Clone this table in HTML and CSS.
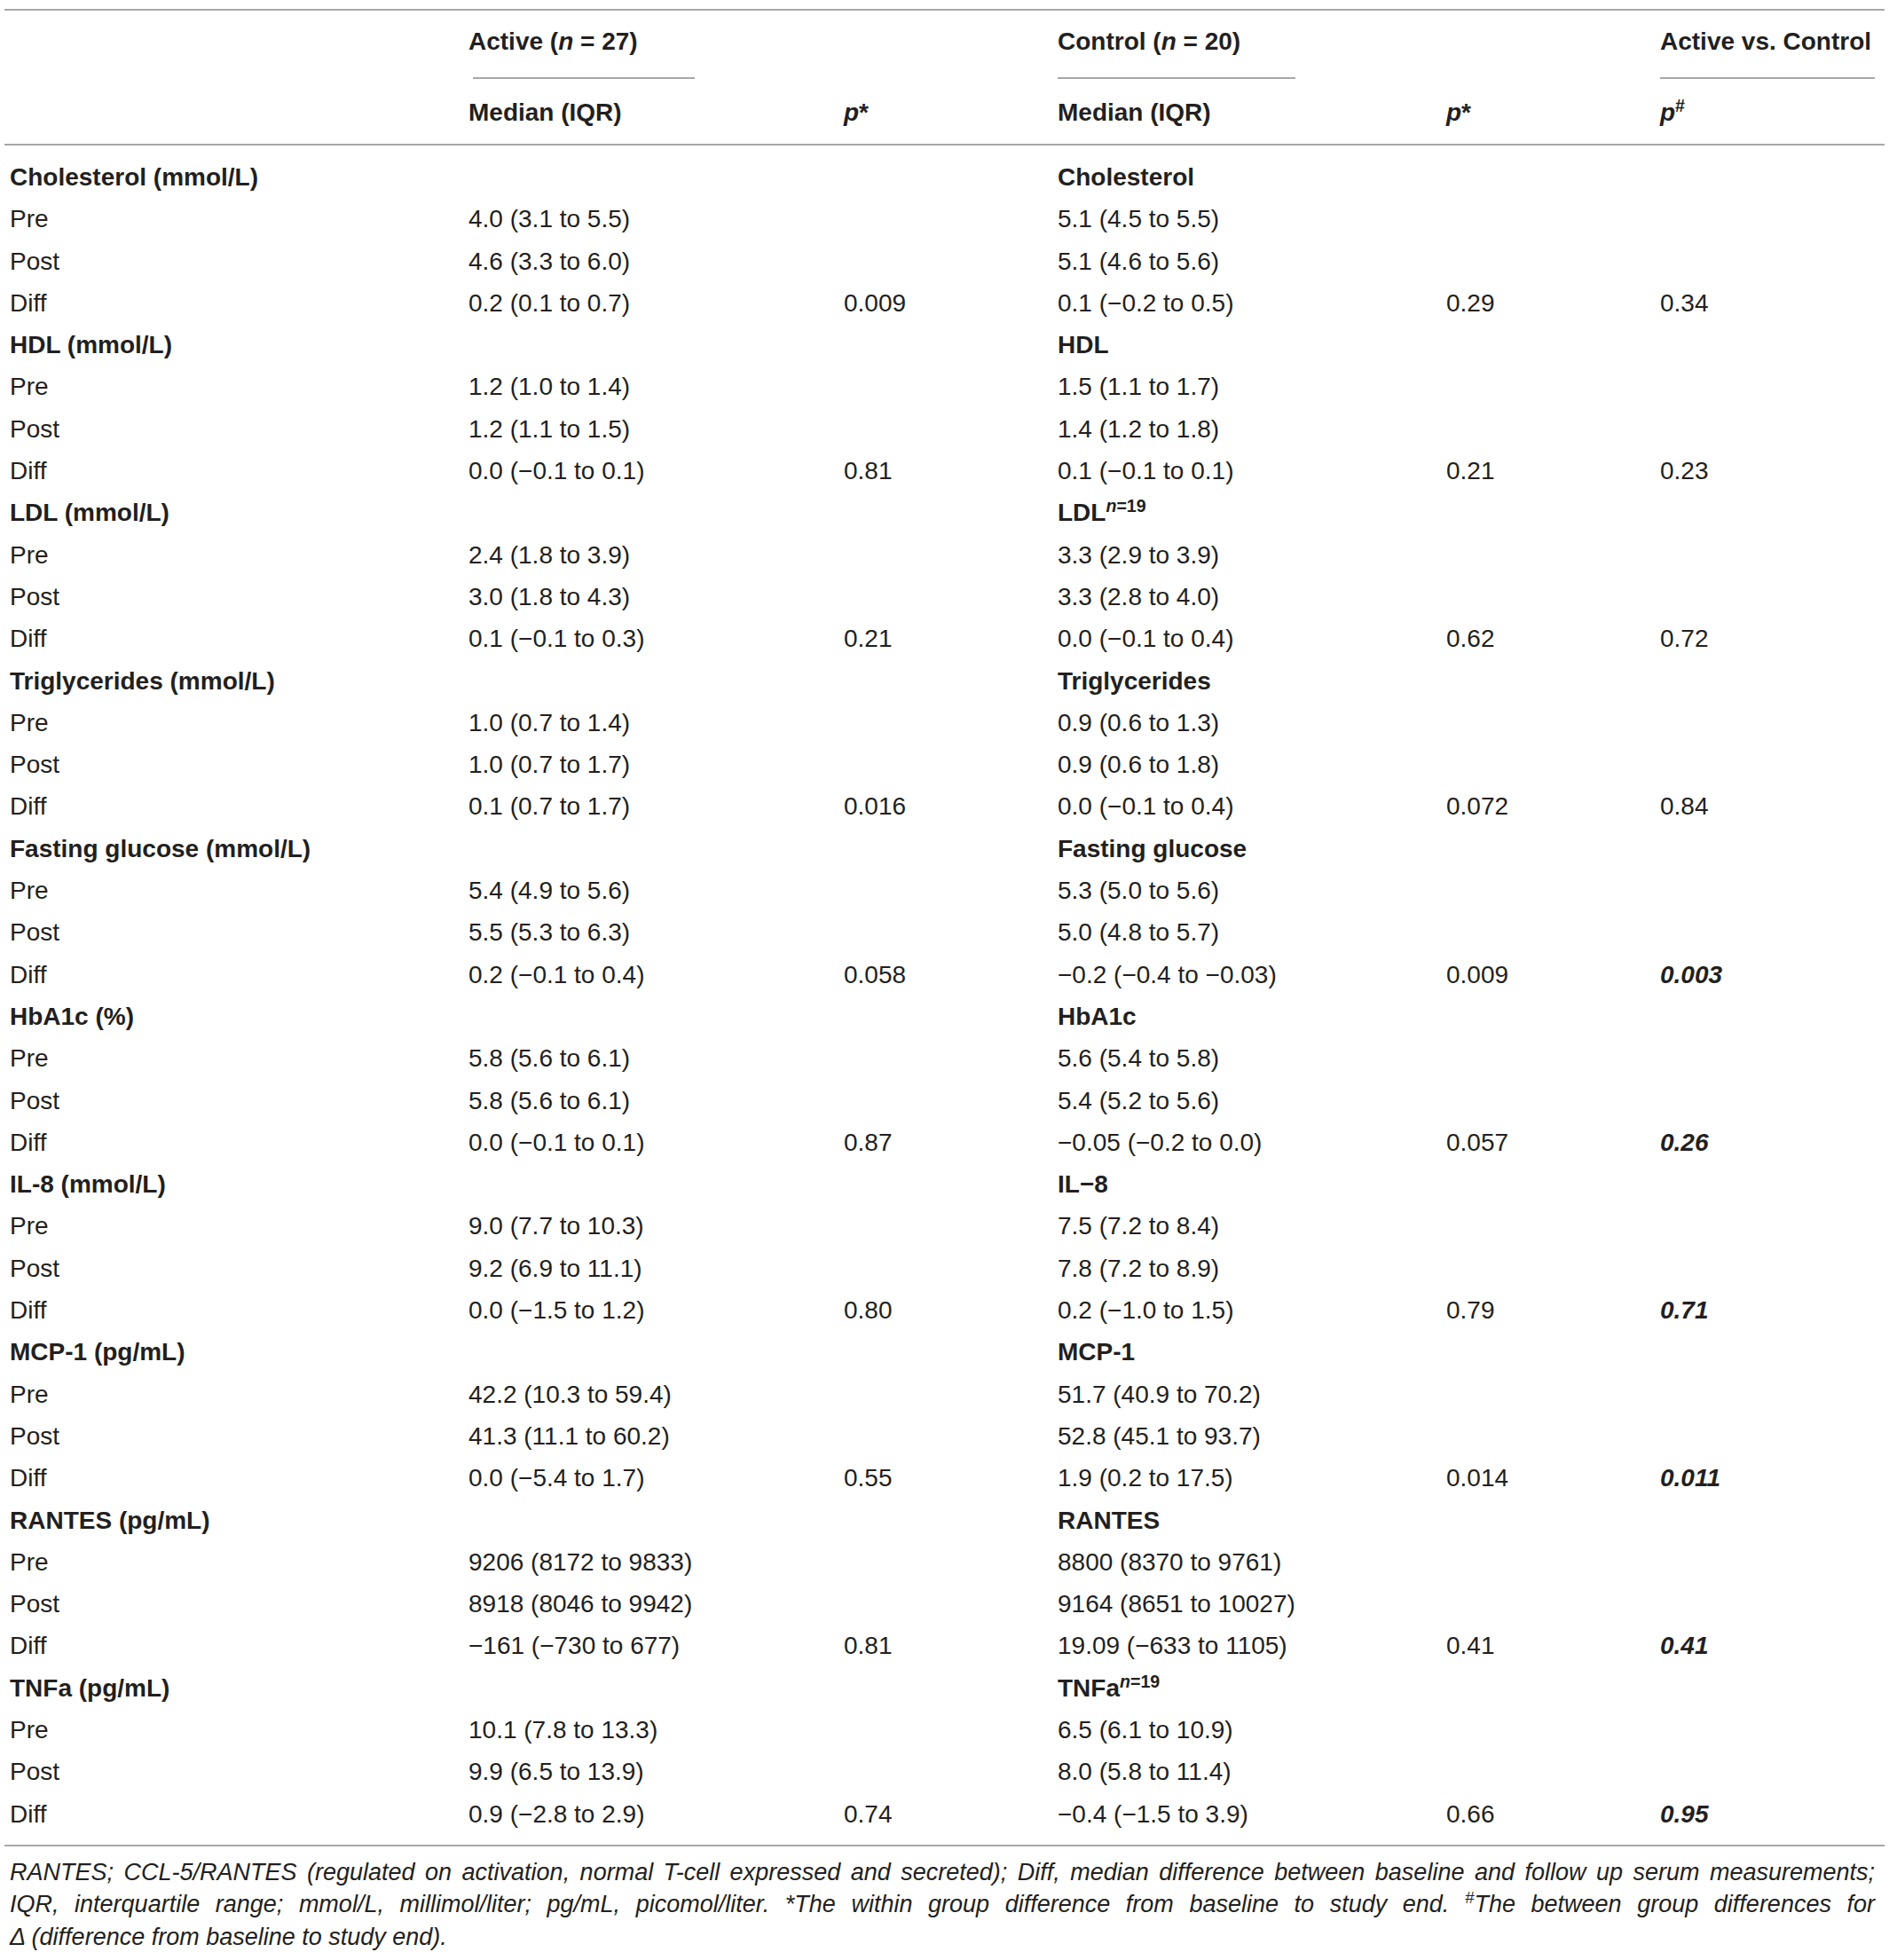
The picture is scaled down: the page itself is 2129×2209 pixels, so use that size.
FILE: index.html
```html
<!DOCTYPE html>
<html lang="en">
<head>
  <meta charset="UTF-8">
  <title>Serum markers, Active vs. Control</title>
  <link rel="stylesheet" href="styles.css">
</head>
<body>
  <div class="wrap">
    <table class="results">
      <colgroup>
        <col class="c-label">
        <col class="c-med1">
        <col class="c-p1">
        <col class="c-med2">
        <col class="c-p2">
        <col class="c-p3">
      </colgroup>
      <thead>
        <tr class="group-row">
          <th></th>
          <th colspan="2"><div class="group group-active">Active (<i>n</i> = 27)</div></th>
          <th colspan="2"><div class="group group-control">Control (<i>n</i> = 20)</div></th>
          <th><div class="group group-between">Active vs. Control</div></th>
        </tr>
        <tr class="sub-row">
          <th></th>
          <th>Median (IQR)</th>
          <th><i>p</i>*</th>
          <th>Median (IQR)</th>
          <th><i>p</i>*</th>
          <th><i>p</i><sup>#</sup></th>
        </tr>
      </thead>
      <tbody>
        <tr class="head first"><td>Cholesterol (mmol/L)</td><td></td><td></td><td>Cholesterol</td><td></td><td></td></tr>
        <tr><td>Pre</td><td>4.0 (3.1 to 5.5)</td><td></td><td>5.1 (4.5 to 5.5)</td><td></td><td></td></tr>
        <tr><td>Post</td><td>4.6 (3.3 to 6.0)</td><td></td><td>5.1 (4.6 to 5.6)</td><td></td><td></td></tr>
        <tr><td>Diff</td><td>0.2 (0.1 to 0.7)</td><td>0.009</td><td>0.1 (&minus;0.2 to 0.5)</td><td>0.29</td><td>0.34</td></tr>

        <tr class="head"><td>HDL (mmol/L)</td><td></td><td></td><td>HDL</td><td></td><td></td></tr>
        <tr><td>Pre</td><td>1.2 (1.0 to 1.4)</td><td></td><td>1.5 (1.1 to 1.7)</td><td></td><td></td></tr>
        <tr><td>Post</td><td>1.2 (1.1 to 1.5)</td><td></td><td>1.4 (1.2 to 1.8)</td><td></td><td></td></tr>
        <tr><td>Diff</td><td>0.0 (&minus;0.1 to 0.1)</td><td>0.81</td><td>0.1 (&minus;0.1 to 0.1)</td><td>0.21</td><td>0.23</td></tr>

        <tr class="head"><td>LDL (mmol/L)</td><td></td><td></td><td>LDL<sup><i>n</i>=19</sup></td><td></td><td></td></tr>
        <tr><td>Pre</td><td>2.4 (1.8 to 3.9)</td><td></td><td>3.3 (2.9 to 3.9)</td><td></td><td></td></tr>
        <tr><td>Post</td><td>3.0 (1.8 to 4.3)</td><td></td><td>3.3 (2.8 to 4.0)</td><td></td><td></td></tr>
        <tr><td>Diff</td><td>0.1 (&minus;0.1 to 0.3)</td><td>0.21</td><td>0.0 (&minus;0.1 to 0.4)</td><td>0.62</td><td>0.72</td></tr>

        <tr class="head"><td>Triglycerides (mmol/L)</td><td></td><td></td><td>Triglycerides</td><td></td><td></td></tr>
        <tr><td>Pre</td><td>1.0 (0.7 to 1.4)</td><td></td><td>0.9 (0.6 to 1.3)</td><td></td><td></td></tr>
        <tr><td>Post</td><td>1.0 (0.7 to 1.7)</td><td></td><td>0.9 (0.6 to 1.8)</td><td></td><td></td></tr>
        <tr><td>Diff</td><td>0.1 (0.7 to 1.7)</td><td>0.016</td><td>0.0 (&minus;0.1 to 0.4)</td><td>0.072</td><td>0.84</td></tr>

        <tr class="head"><td>Fasting glucose (mmol/L)</td><td></td><td></td><td>Fasting glucose</td><td></td><td></td></tr>
        <tr><td>Pre</td><td>5.4 (4.9 to 5.6)</td><td></td><td>5.3 (5.0 to 5.6)</td><td></td><td></td></tr>
        <tr><td>Post</td><td>5.5 (5.3 to 6.3)</td><td></td><td>5.0 (4.8 to 5.7)</td><td></td><td></td></tr>
        <tr><td>Diff</td><td>0.2 (&minus;0.1 to 0.4)</td><td>0.058</td><td>&minus;0.2 (&minus;0.4 to &minus;0.03)</td><td>0.009</td><td class="sig">0.003</td></tr>

        <tr class="head"><td>HbA1c (%)</td><td></td><td></td><td>HbA1c</td><td></td><td></td></tr>
        <tr><td>Pre</td><td>5.8 (5.6 to 6.1)</td><td></td><td>5.6 (5.4 to 5.8)</td><td></td><td></td></tr>
        <tr><td>Post</td><td>5.8 (5.6 to 6.1)</td><td></td><td>5.4 (5.2 to 5.6)</td><td></td><td></td></tr>
        <tr><td>Diff</td><td>0.0 (&minus;0.1 to 0.1)</td><td>0.87</td><td>&minus;0.05 (&minus;0.2 to 0.0)</td><td>0.057</td><td class="sig">0.26</td></tr>

        <tr class="head"><td>IL-8 (mmol/L)</td><td></td><td></td><td>IL&minus;8</td><td></td><td></td></tr>
        <tr><td>Pre</td><td>9.0 (7.7 to 10.3)</td><td></td><td>7.5 (7.2 to 8.4)</td><td></td><td></td></tr>
        <tr><td>Post</td><td>9.2 (6.9 to 11.1)</td><td></td><td>7.8 (7.2 to 8.9)</td><td></td><td></td></tr>
        <tr><td>Diff</td><td>0.0 (&minus;1.5 to 1.2)</td><td>0.80</td><td>0.2 (&minus;1.0 to 1.5)</td><td>0.79</td><td class="sig">0.71</td></tr>

        <tr class="head"><td>MCP-1 (pg/mL)</td><td></td><td></td><td>MCP-1</td><td></td><td></td></tr>
        <tr><td>Pre</td><td>42.2 (10.3 to 59.4)</td><td></td><td>51.7 (40.9 to 70.2)</td><td></td><td></td></tr>
        <tr><td>Post</td><td>41.3 (11.1 to 60.2)</td><td></td><td>52.8 (45.1 to 93.7)</td><td></td><td></td></tr>
        <tr><td>Diff</td><td>0.0 (&minus;5.4 to 1.7)</td><td>0.55</td><td>1.9 (0.2 to 17.5)</td><td>0.014</td><td class="sig">0.011</td></tr>

        <tr class="head"><td>RANTES (pg/mL)</td><td></td><td></td><td>RANTES</td><td></td><td></td></tr>
        <tr><td>Pre</td><td>9206 (8172 to 9833)</td><td></td><td>8800 (8370 to 9761)</td><td></td><td></td></tr>
        <tr><td>Post</td><td>8918 (8046 to 9942)</td><td></td><td>9164 (8651 to 10027)</td><td></td><td></td></tr>
        <tr><td>Diff</td><td>&minus;161 (&minus;730 to 677)</td><td>0.81</td><td>19.09 (&minus;633 to 1105)</td><td>0.41</td><td class="sig">0.41</td></tr>

        <tr class="head"><td>TNFa (pg/mL)</td><td></td><td></td><td>TNFa<sup><i>n</i>=19</sup></td><td></td><td></td></tr>
        <tr><td>Pre</td><td>10.1 (7.8 to 13.3)</td><td></td><td>6.5 (6.1 to 10.9)</td><td></td><td></td></tr>
        <tr><td>Post</td><td>9.9 (6.5 to 13.9)</td><td></td><td>8.0 (5.8 to 11.4)</td><td></td><td></td></tr>
        <tr class="last"><td>Diff</td><td>0.9 (&minus;2.8 to 2.9)</td><td>0.74</td><td>&minus;0.4 (&minus;1.5 to 3.9)</td><td>0.66</td><td class="sig">0.95</td></tr>
      </tbody>
    </table>

    <p class="note">
      <span class="note-line">RANTES; CCL-5/RANTES (regulated on activation, normal T-cell expressed and secreted); Diff, median difference between baseline and follow up serum measurements;</span>
      <span class="note-line">IQR, interquartile range; mmol/L, millimol/liter; pg/mL, picomol/liter. *The within group difference from baseline to study end. <sup>#</sup>The between group differences for</span>
      &Delta; (difference from baseline to study end).
    </p>
  </div>
</body>
</html>
```

FILE: styles.css
```css
body {
  margin: 0;
  padding: 0;
  background: #fff;
  color: #231f20;
  font-family: "Liberation Sans", Arial, sans-serif;
}

.wrap {
  padding: 0 5px;
}

.results {
  width: 100%;
  border-collapse: collapse;
  table-layout: fixed;
  font-size: 28px;
  margin-top: 10px;
  border-top: 2px solid #a7a7a7;
  border-bottom: 2px solid #a7a7a7;
}

.c-label { width: 517px; }
.c-med1 { width: 423px; }
.c-p1 { width: 241px; }
.c-med2 { width: 438px; }
.c-p2 { width: 241px; }
.c-p3 { width: 259px; }

th {
  text-align: left;
  font-weight: bold;
  line-height: 40px;
  padding: 0 6px;
  vertical-align: top;
  white-space: nowrap;
}

.group-row th {
  padding-top: 15px;
}

.group {
  padding-bottom: 20px;
  border-bottom: 2px solid #a7a7a7;
}

.group-active { width: 250px; margin-left: 5px; text-indent: -5px; }
.group-control { width: 268px; }
.group-between { width: 242px; }

.sub-row th {
  padding-top: 18px;
  padding-bottom: 15px;
  border-bottom: 2px solid #a7a7a7;
}

sup {
  font-size: 0.7em;
  line-height: 0;
}

td {
  line-height: 47.3px;
  padding: 0 6px;
  white-space: nowrap;
}

.head td {
  font-weight: bold;
}

.first td {
  padding-top: 12px;
}

.last td {
  padding-bottom: 11px;
}

.sig {
  font-weight: bold;
  font-style: italic;
}

.note {
  margin: 0;
  padding: 11px 11px 0 6px;
  font-size: 27px;
  font-style: italic;
  line-height: 36.6px;
}

.note-line {
  display: block;
  text-align: justify;
  text-align-last: justify;
}
```
